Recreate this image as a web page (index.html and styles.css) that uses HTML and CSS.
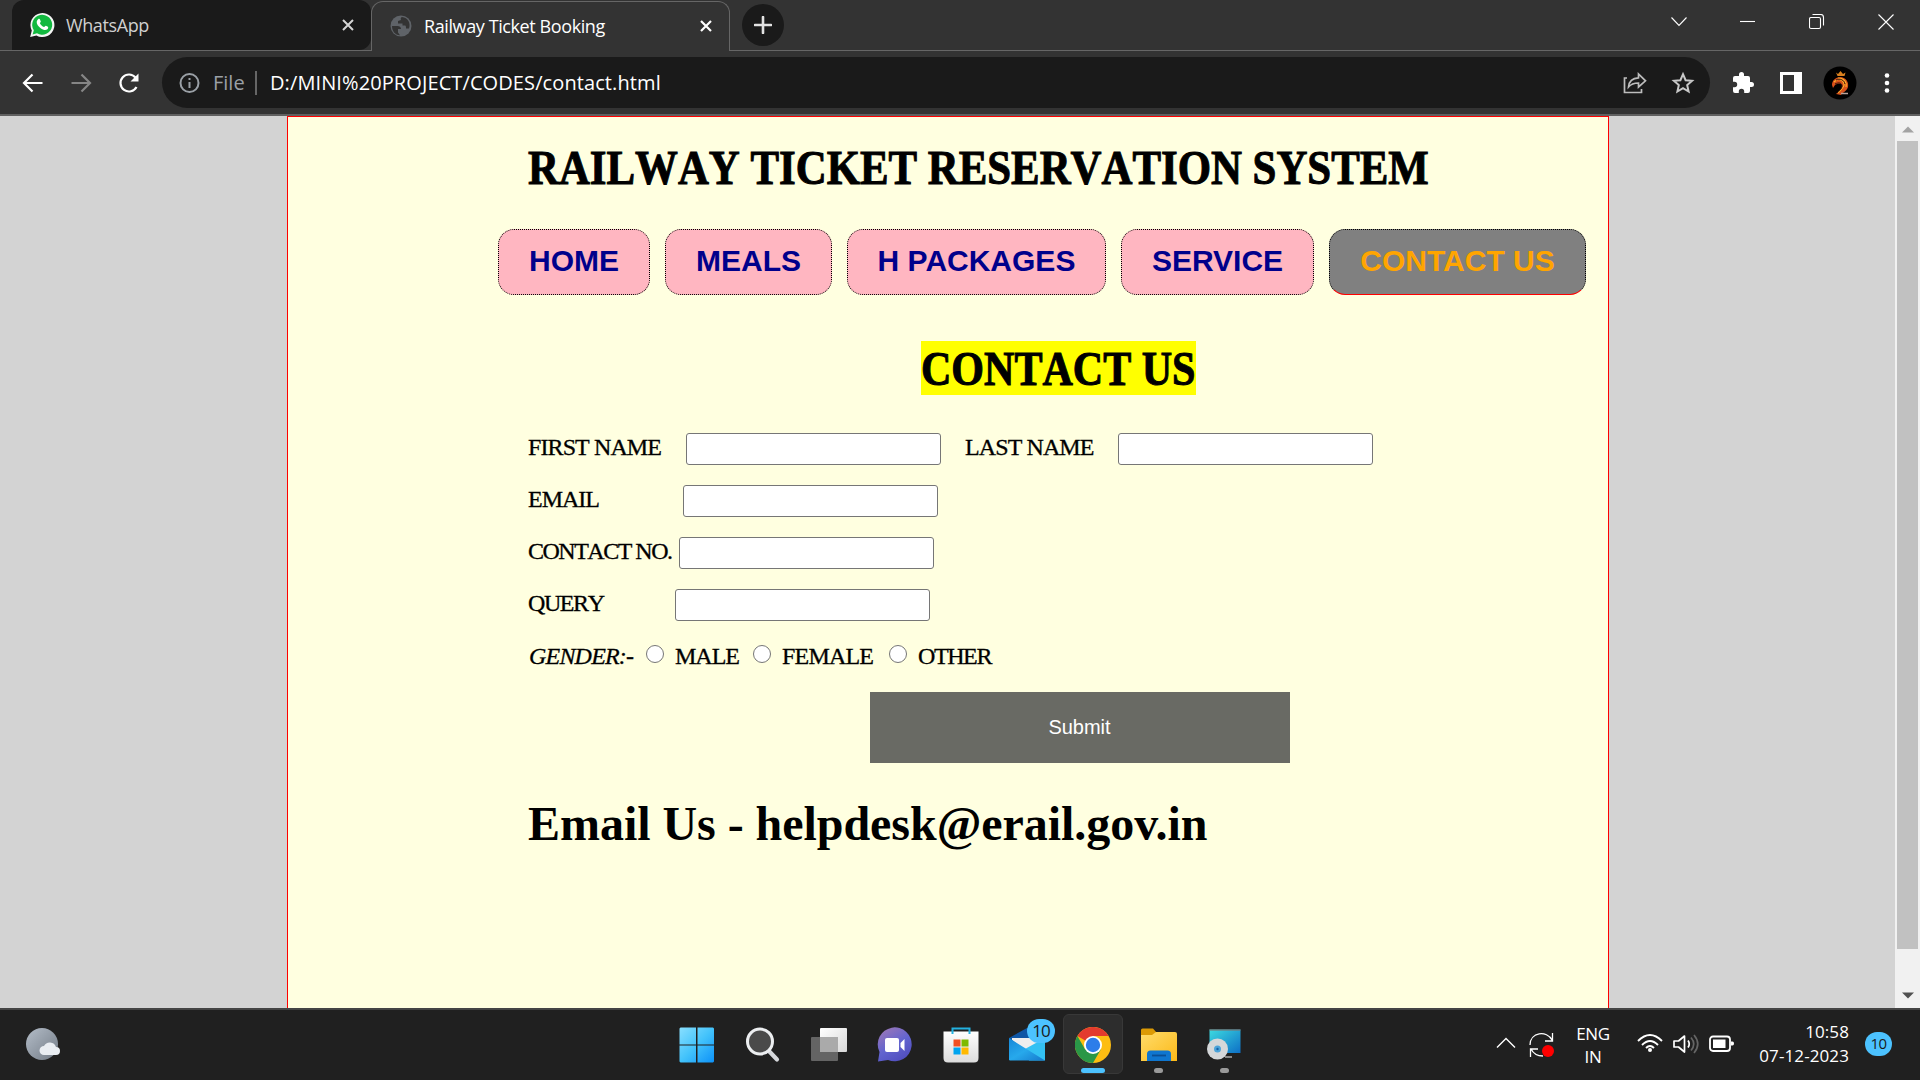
FILE: index.html
```html
<!DOCTYPE html>
<html lang="en">
<head>
<meta charset="utf-8">
<title>Railway Ticket Booking</title>
<link rel="stylesheet" href="styles.css">
</head>
<body>
<header class="tabstrip">
  <div class="tab">
    <svg class="fav" width="26" height="26" viewBox="0 0 26 26"><path d="M1.2 25 2.8 18.6A12 12 0 1 1 7.4 23.4Z" fill="#f5f5f5"/><path d="M3.6 22.4 4.8 18.2A10 10 0 1 1 8 21.3Z" fill="#12b93f"/><path d="M9.2 7.2c.8-.8 1.5-.4 1.8.4l.8 1.9c.1.6-.9 1.300-.9 1.700.9 1.900 2.300 3.100 4.100 3.900.6 0 1.300-1.500 1.900-1.300l2 1c.6.5.2 1.900-.5 2.500-1.800 1.500-4.400.6-6.700-1.100-2.400-1.800-4.200-4.300-4-6.300.1-1.100.7-1.900 1.500-2.700Z" fill="#fff"/></svg>
    <span class="tab-title t1">WhatsApp</span>
    <svg class="x" width="12" height="12" viewBox="0 0 12 12"><path d="M1 1 11 11M11 1 1 11" stroke="#d5d5d5" stroke-width="2"/></svg>
  </div>
  <div class="tab active">
    <svg class="fav" width="22" height="22" viewBox="0 0 22 22"><circle cx="11" cy="11" r="10.500" fill="#5f6368"/><path d="M2 11h5.500c2 0 3.500 1 3.500 3h-3v3.500l2 2.700C5 20 2 16 2 11ZM12 2c-1.500.2-1.500 2-1 3l-3 1v2.500h4.500v2H15c1 0 1 2 1 3h3c2-5-1-11-7-11.500Z" fill="#333"/></svg>
    <span class="tab-title t2">Railway Ticket Booking</span>
    <svg class="x" width="12" height="12" viewBox="0 0 12 12"><path d="M1 1 11 11M11 1 1 11" stroke="#fff" stroke-width="2.200"/></svg>
  </div>
  <div class="newtab"><svg width="18" height="18" viewBox="0 0 18 18"><path d="M9 1v16M1 9h16" stroke="#e2e2e2" stroke-width="2.600" stroke-linecap="round"/></svg></div>
  <div class="winctl">
    <svg width="16" height="16" viewBox="0 0 16 16"><path d="M.5 3.500 8 11.500l7.500-8" /></svg>
    <svg width="16" height="16" viewBox="0 0 16 16"><path d="M0 7.500h15" /></svg>
    <svg width="16" height="16" viewBox="0 0 16 16"><rect x=".5" y="3.500" width="11" height="11" rx="1.500"/><path d="M3.500.5h8q3 0 3 3v8"/></svg>
    <svg width="16" height="16" viewBox="0 0 16 16"><path d="M.5.500l15 15M15.500.500l-15 15"/></svg>
  </div>
</header>
<div class="toolbar">
  <svg class="navi" width="22" height="22" viewBox="0 0 22 22"><path d="M20.500 11H2.500M10.500 2.500 2 11l8.500 8.500" stroke="#fff"/></svg>
  <svg class="navi" width="22" height="22" viewBox="0 0 22 22"><path d="M1.500 11h18M11.500 2.500 20 11l-8.500 8.500" stroke="#868686"/></svg>
  <svg class="navi" width="22" height="22" viewBox="0 0 22 22"><path d="M18.500 15A8.500 8.500 0 1 1 17.500 5.500" stroke="#fff"/><path d="M20.500 1.500v8h-8Z" fill="#fff" stroke="none"/></svg>
  <div class="omnibox">
    <svg width="22" height="22" viewBox="0 0 22 22"><circle cx="10.500" cy="11" r="9" fill="none" stroke="#9aa0a6" stroke-width="2"/><path d="M10.500 10v6M10.500 6v2" stroke="#9aa0a6" stroke-width="2"/></svg>
    <span class="scheme">File</span><i class="sep"></i><span class="url">D:/MINI%20PROJECT/CODES/contact.html</span>
    <svg class="share" width="24" height="22" viewBox="0 0 24 22" fill="none" stroke="#bdbdbd" stroke-width="1.700"><path d="M4 6H1.500v14.500h17V17"/><path d="M5.500 15C6 9 10 6 15.500 5.800V2L22.500 8.800 15.500 15v-4C11 11 8 12 5.500 15Z"/></svg>
    <svg width="24" height="24" viewBox="0 0 24 24" fill="none" stroke="#c8c8c8" stroke-width="2"><path d="m12 3.200 2.600 6 6.500.6-4.900 4.300 1.400 6.400L12 17.200l-5.600 3.300 1.400-6.400-4.900-4.300 6.500-.6Z"/></svg>
  </div>
  <svg class="puz" width="24" height="24" viewBox="0 0 24 24"><path fill="#fff" d="M20.500 11H19V7a2 2 0 0 0-2-2h-4V3.500a2.500 2.500 0 0 0-5 0V5H4a2 2 0 0 0-2 2v3.800h1.500a2.700 2.700 0 0 1 0 5.400H2V20a2 2 0 0 0 2 2h3.800v-1.500a2.700 2.700 0 0 1 5.400 0V22H17a2 2 0 0 0 2-2v-4h1.500a2.500 2.500 0 0 0 0-5Z"/></svg>
  <svg class="side" width="22" height="22" viewBox="0 0 22 22"><path fill="#fff" d="M0 0h22v22H0Z"/><path fill="#333" d="M3 3h11v16H3Z"/></svg>
  <svg class="avatar" width="34" height="34" viewBox="0 0 34 34"><circle cx="17" cy="17" r="16.500" fill="#000"/><path d="M13 6.500l2 1.500 2.500-3 2.500 3 2.500-1.500-1 3.500h-7Z" fill="#d8801f"/><path d="M9 19c0-5 4-8 9-8 5 1 8 5 7 10-1 4-5 5-7 8l-5-1c3-3 7-5 6-9-2-2-5-1-7 0l-2 3Z" fill="#d8501a"/><path d="M11 16c4-4 9-3 10 2 1 3-4 6-6 9M15 12c6 0 9 4 8 9" stroke="#ffb52c" stroke-width="1.100" fill="none"/><path d="M12 18c4-2 7-1 7 2s-3 5-5 7M13 14c4-2 8 0 9 4" fill="none" stroke="#35100a"/><path d="M18 27.500h7" stroke="#b9a39b" stroke-width="1.500"/></svg>
  <svg class="dots" width="6" height="22" viewBox="0 0 6 22" fill="#fff"><circle cx="3" cy="3.500" r="2.300"/><circle cx="3" cy="11" r="2.300"/><circle cx="3" cy="18.500" r="2.300"/></svg>
</div>

<main class="viewport">
  <div class="page">
    <h1 class="site-title">RAILWAY TICKET RESERVATION SYSTEM</h1>
    <nav class="menu">
      <a class="w1">HOME</a><a class="w2">MEALS</a><a class="w3">H PACKAGES</a><a class="w4">SERVICE</a><a class="w5 current">CONTACT US</a>
    </nav>
    <div class="heading"><h2><span>CONTACT US</span></h2></div>
    <form class="form">
      <div class="row"><label class="l1">FIRST NAME</label><input type="text"><label class="l2">LAST NAME</label><input type="text"></div>
      <div class="row"><label class="l3">EMAIL</label><input type="text"></div>
      <div class="row"><label class="l4">CONTACT NO.</label><input type="text"></div>
      <div class="row"><label class="l5">QUERY</label><input type="text"></div>
      <div class="row gender"><em>GENDER:-</em><i class="radio"></i><span class="g1">MALE</span><i class="radio"></i><span class="g2">FEMALE</span><i class="radio"></i><span class="g3">OTHER</span></div>
      <button type="button" class="submit">Submit</button>
    </form>
    <h1 class="mail">Email Us - helpdesk@erail.gov.in</h1>
  </div>
  <div class="scrollbar">
    <svg width="12" height="7" viewBox="0 0 12 7"><path d="M0 6.500 6 .5l6 6Z" fill="#a3a3a3"/></svg>
    <div class="thumb"></div>
    <svg width="12" height="7" viewBox="0 0 12 7"><path d="M0 .5 6 6.500l6-6Z" fill="#505050"/></svg>
  </div>
</main>

<footer class="taskbar">
  <svg class="weather" width="36" height="36" viewBox="0 0 36 36"><defs><linearGradient id="w" x2="1" y2="1"><stop stop-color="#b4bdc8"/><stop offset="1" stop-color="#727b86"/></linearGradient></defs><circle cx="16" cy="18" r="16" fill="url(#w)"/><path d="M18 29a4.500 4.500 0 0 1 0-9 6.500 6.500 0 0 1 12 1 4 4 0 0 1 0 8Z" fill="#e9edf2"/></svg>
  <div class="apps">
    <div class="app"><svg width="36" height="36" viewBox="0 0 36 36"><defs><linearGradient id="b" gradientUnits="userSpaceOnUse" x1="0" y1="0" x2="36" y2="36"><stop stop-color="#8be0ff"/><stop offset=".5" stop-color="#43c3fb"/><stop offset="1" stop-color="#0a8ff8"/></linearGradient></defs><path fill="url(#b)" d="M1.500.5H17v17H.5v-16ZM18.500.5h15.500l1 1v16H18.500ZM.5 18.500H17V35.500H1.500l-1-1ZM18.500 18.500H35v16l-1 1H18.500Z"/></svg></div>
    <div class="app"><svg width="36" height="36" viewBox="0 0 36 36"><path d="m23 23 9 9.500" stroke="#d6d8dc" stroke-width="4.200" stroke-linecap="round"/><circle cx="15" cy="14.500" r="12.500" fill="#4a4a4a" stroke="#eceef0" stroke-width="3"/></svg></div>
    <div class="app"><svg width="38" height="36" viewBox="0 0 38 36"><defs><linearGradient id="tv" x2="1" y2="1"><stop stop-color="#fff"/><stop offset="1" stop-color="#d8d8d8"/></linearGradient></defs><rect x="10" y="1" width="27" height="24" rx="1" fill="url(#tv)"/><rect x="1" y="10" width="27" height="24" rx="1" fill="#646464"/><path d="M10 10h18v15H10Z" fill="#aaa"/></svg></div>
    <div class="app"><svg width="36" height="36" viewBox="0 0 36 36"><defs><linearGradient id="ch" x2=".6" y2="1"><stop stop-color="#a47ab4"/><stop offset=".6" stop-color="#6264cf"/><stop offset="1" stop-color="#5250c0"/></linearGradient></defs><path d="M1 34.500 2.500 25A17 17 0 1 1 11 33Z" fill="url(#ch)"/><rect x="8" y="11" width="14" height="14" rx="2" fill="#fff"/><path d="m23.500 16 4-4v12l-4-4Z" fill="#fff"/></svg></div>
    <div class="app"><svg width="36" height="36" viewBox="0 0 36 36"><defs><linearGradient id="st" x2="0" y2="1"><stop stop-color="#fff"/><stop offset="1" stop-color="#dcdcdc"/></linearGradient></defs><path d="M.5 4.500h35V31q0 4.500-4.500 4.500H5Q.5 35.500.5 31Z" fill="url(#st)"/><path d="M9.500 7V1.500h17V7" fill="none" stroke="#23b1e0" stroke-width="2"/><path fill="#f25022" d="M10.500 12.500h7v7h-7Z"/><path fill="#7fba00" d="M18.500 12.500h7v7h-7Z"/><path fill="#00a4ef" d="M10.500 20.500h7v7h-7Z"/><path fill="#ffb900" d="M18.500 20.500h7v7h-7Z"/></svg></div>
    <div class="app"><svg width="36" height="36" viewBox="0 0 36 36"><defs><linearGradient id="ml" x2="1" y2="1"><stop stop-color="#1687d8"/><stop offset=".5" stop-color="#27a9ec"/><stop offset="1" stop-color="#1578cc"/></linearGradient></defs><path d="M0 11 18 1l18 10v12H0Z" fill="#0f56a5"/><path d="M3 11h30v8L18 25 3 13Z" fill="#eee"/><path d="M36 11v22.500H20L16 22Z" fill="#33c1f3"/><path d="M0 11 36 33.500H1L0 33Z" fill="url(#ml)"/></svg><b class="count">10</b></div>
    <div class="app on"><svg width="36" height="36" viewBox="0 0 36 36"><circle cx="18" cy="18" r="18" fill="#fdbd12"/><path d="M18 18 2.400 9A18 18 0 0 1 33.600 9H18Z" fill="#e33b2e"/><path d="M2.400 9A18 18 0 0 0 18 36l7.800-13.500L10.200 22.500Z" fill="#2a9747"/><circle cx="18" cy="18" r="9" fill="#fff"/><circle cx="18" cy="18" r="7.200" fill="#2d7de9"/></svg><i class="run"></i></div>
    <div class="app"><svg width="36" height="36" viewBox="0 0 36 36"><defs><linearGradient id="fo" x2="1" y2="1"><stop stop-color="#ffdc6b"/><stop offset="1" stop-color="#fcb918"/></linearGradient></defs><path d="M0 3q0-1.500 1.500-1.500H12l3.500 4V9H0Z" fill="#dc9a05"/><path d="M0 8h11l4-3h19q2 0 2 2v27H0Z" fill="url(#fo)"/><path d="M6 34V27q0-3.500 3.500-3.500h17q3.500 0 3.500 3.500v7Z" fill="#0f76cf"/><path d="M11 28.500h14" stroke="#0a4f94" stroke-width="1.800"/></svg><i class="run dot"></i></div>
    <div class="app"><svg width="36" height="36" viewBox="0 0 36 36"><defs><linearGradient id="sc" x2="1" y2="1"><stop stop-color="#3cdbe0"/><stop offset="1" stop-color="#0d6fc6"/></linearGradient></defs><path d="M2.500 2.500h31V26h-31Z" fill="url(#sc)"/><path d="M2.500 3h31" stroke="#777" stroke-width="1.200"/><path d="M18 30h7" stroke="#aaa" stroke-width="1.500"/><circle cx="10.500" cy="22" r="10.500" fill="#d4d7d9"/><circle cx="10.500" cy="22" r="3.500" fill="#4ba3d9"/><circle cx="10.500" cy="22" r="1.200" fill="#1560a8"/></svg><i class="run dot"></i></div>
  </div>
  <div class="tray">
    <svg class="up" width="20" height="12" viewBox="0 0 20 12"><path d="m1 10.500 9-9 9 9" fill="none" stroke="#fff" stroke-width="1.400"/></svg>
    <svg class="sync" width="26" height="26" viewBox="0 0 26 26" fill="none" stroke="#fff" stroke-width="1.300"><path d="M1 13C1 0 18-2 23 8M23.500 1v8H16M1.500 25v-8H9M2 17c3 6 7 7 12 7"/><circle cx="19" cy="19" r="6" fill="#f00" stroke="none"/></svg>
    <div class="lang">ENG<br>IN</div>
    <svg class="wifi" width="26" height="20" viewBox="0 0 26 20" fill="none" stroke="#fff" stroke-width="1.900"><path d="M1 8q12-12 24 0M5 12q8-8 16 0M9 15q4-4 8 0"/><circle cx="13" cy="17" r="2" fill="#fff" stroke="none"/></svg>
    <svg class="vol" width="26" height="22" viewBox="0 0 26 22" fill="none" stroke-width="1.700"><path d="M1 8v6h4.500l6 5V3l-6 5Z" stroke="#fff" stroke-linejoin="round"/><path d="M15 7.500q2.500 3.500 0 7" stroke="#fff"/><path d="M18 4.500q5.500 6.500 0 13M21 2q7.500 9 0 18" stroke="#656565"/></svg>
    <svg class="bat" width="26" height="18" viewBox="0 0 26 18"><rect x="1" y="1.500" width="20" height="14.500" rx="3" fill="none" stroke="#fff" stroke-width="1.800"/><path d="M4 4.500h12.500v8.500H4ZM22 6.500h1.500q1.500 0 1.500 2t-1.500 2H22Z" fill="#fff"/></svg>
    <div class="clock">10:58<br>07-12-2023</div>
    <b class="note">10</b>
  </div>
</footer>
</body>
</html>
```

FILE: styles.css
```css
* { box-sizing: border-box; }
body {
  margin: 0;
  width: 1920px;
  height: 1080px;
  overflow: hidden;
  display: flex;
  flex-direction: column;
  font-family: "Open Sans", "Noto Sans", sans-serif;
}
svg { display: block; flex: none; }

/* browser window */
.tabstrip {
  height: 51px;
  flex: none;
  display: flex;
  background: #333;
  box-shadow: inset 0 -1px #666;
  padding-left: 12px;
}
.tab {
  width: 359px;
  height: 50px;
  display: flex;
  align-items: center;
  padding: 0 17px;
  color: #d0d0d0;
  background: #1a1a1a;
  border-radius: 12px 12px 12px 0;
  font-size: 18px;
}
.tab.active {
  height: 50px;
  width: 359px;
  margin-top: 1px;
  padding: 0 17px 2px 18px;
  background: #333;
  color: #fff;
  border: 1px solid #666;
  border-bottom: 0;
  border-radius: 12px 12px 0 0;
}
.tab-title { margin-left: 11px; white-space: nowrap; }
.active .tab-title { margin-left: 12px; }
.t1 { letter-spacing: -0.4px; }
.t2 { letter-spacing: -0.4px; }
.tab .x { margin-left: auto; }
.newtab {
  width: 42px;
  height: 42px;
  margin: 4px 0 0 12px;
  border-radius: 50%;
  background: #1a1a1a;
  display: flex;
  align-items: center;
  justify-content: center;
}
.winctl {
  margin-left: auto;
  padding: 14px 26px 0 0;
  display: flex;
  gap: 53px;
  fill: none;
  stroke: #fff;
  stroke-width: 1.1;
}
.toolbar {
  height: 65px;
  flex: none;
  display: flex;
  align-items: center;
  background: #333;
  border-bottom: 2px solid #606060;
  padding-left: 22px;
}
.navi { margin-right: 26px; fill: none; stroke-width: 2.2; }
.omnibox {
  width: 1548px;
  height: 51px;
  margin-left: -4px;
  padding: 0 15px 0 17px;
  display: flex;
  align-items: center;
  border-radius: 26px;
  background: #1a1a1a;
  font-size: 20px;
  white-space: nowrap;
}
.scheme { margin-left: 12px; width: 34px; color: #9aa0a6; letter-spacing: 0; }
.sep { width: 2px; height: 24px; margin: 0 13px 0 8px; background: #666; }
.url { color: #fff; letter-spacing: 0.1px; }
.share { margin: 0 24px 0 auto; }
.puz { margin-left: 21px; }
.side { margin-left: 25px; }
.avatar { margin-left: 21px; }
.dots { margin-left: 27px; }

/* web page */
.viewport {
  height: 892px;
  flex: none;
  display: flex;
  background: #d3d3d3;
  padding-left: 287px;
}
.page {
  width: 1322px;
  border: 1px solid #f00;
  border-bottom: 0;
  background: #ffffe0;
  font-family: Algerian, "Liberation Serif", serif;
  color: #000;
}
.site-title {
  margin: 23px 0 0 240px;
  font-size: 49px;
  line-height: 56px;
  height: 56px;
  font-kerning: none;
  white-space: nowrap;
  transform: scaleX(.874);
  transform-origin: 0 0;
  -webkit-text-stroke: 1px #000;
}
.menu {
  display: flex;
  gap: 15px;
  margin: 33px 0 0 210px;
  font: bold 30px/62px "Liberation Sans", Arial, sans-serif;
}
.menu a {
  height: 66px;
  border: 1px dotted #000;
  border-radius: 16px;
  background: #ffb6c1;
  color: #00008b;
  text-align: center;
  white-space: nowrap;
}
.w1 { width: 152px; }
.w2 { width: 167px; }
.w3 { width: 259px; }
.w4 { width: 193px; }
.menu .w5 { width: 257px; }
.menu .current {
  background: #808080;
  color: #ffa500;
  border-bottom: 1px solid #f00;
}
.heading { margin: 46px 0 0 633px; width: 276px; }
.heading h2 {
  margin: 0;
  width: 275px;
  height: 54px;
  background: #ff0;
  font-size: 49px;
  line-height: 55px;
  font-kerning: none;
  white-space: nowrap;
}
.heading span {
  display: inline-block;
  transform: scaleX(.858);
  transform-origin: 0 0;
  -webkit-text-stroke: 1px #000;
}
.form {
  margin: 38px 0 0 240px;
  font-size: 24px;
  line-height: 28px;
  font-kerning: none;
  white-space: nowrap;
  -webkit-text-stroke: .3px #000;
}
.row { height: 32px; margin-bottom: 20px; display: flex; }
.row input {
  flex: none;
  width: 255px;
  height: 32px;
  margin: 0;
  padding: 0;
  border: 1px solid #767676;
  border-radius: 3px;
  background: #fff;
}
.l1 { width: 158px; letter-spacing: -0.9px; }
.l2 { width: 153px; margin-left: 24px; letter-spacing: -0.9px; }
.l3 { width: 155px; letter-spacing: -1px; }
.l4 { width: 151px; letter-spacing: -1.5px; }
.l5 { width: 147px; letter-spacing: -1.4px; }
.gender { height: 31px; margin-bottom: 20px; line-height: 31px; }
.gender em { width: 118px; padding-left: 1px; letter-spacing: -0.8px; }
.radio {
  width: 18px;
  height: 18px;
  margin-top: 4px;
  border: 1.5px solid #767676;
  border-radius: 50%;
  background: #fff;
}
.g1, .g2, .g3 { padding-left: 11px; }
.g1 { width: 89px; letter-spacing: -1px; }
.g2 { width: 118px; letter-spacing: -0.8px; }
.g3 { letter-spacing: -1.4px; }
.submit {
  display: block;
  width: 420px;
  height: 71px;
  margin-left: 342px;
  padding: 0 7px 0 6px;
  border: 0;
  background: #696a64;
  color: #fff;
  font: 20px "Liberation Sans", Arial, sans-serif;
  -webkit-text-stroke: 0;
}
.mail {
  margin: 33px 0 0 240px;
  font-family: "Liberation Serif", serif;
  font-size: 48px;
  line-height: 55px;
  letter-spacing: -0.04px;
  white-space: nowrap;
}
.scrollbar {
  width: 25px;
  margin-left: auto;
  background: #f1f1f1;
  display: flex;
  flex-direction: column;
  align-items: center;
  padding: 10px 0 9px;
}
.thumb { width: 21px; height: 808px; margin: 8px 0 auto; background: #c1c1c1; }

/* taskbar */
.taskbar {
  height: 72px;
  flex: none;
  display: flex;
  background: #202020;
  border-top: 2px solid #444;
  color: #fff;
}
.weather { margin: 16px 0 0 26px; }
.apps { display: flex; gap: 6px; margin: 4px 0 0 605px; }
.app {
  position: relative;
  width: 60px;
  height: 60px;
  display: flex;
  align-items: center;
  justify-content: center;
  padding-top: 1px;
  border-radius: 6px;
}
.on { background: #2d2d2d; border: 1px solid #383838; }
.run {
  position: absolute;
  left: 17px;
  bottom: 0;
  width: 24px;
  height: 5px;
  border-radius: 3px;
  background: #4cc2ff;
}
.dot { left: 25px; bottom: 1px; width: 9px; background: #9a9a9a; }
.count, .note {
  height: 24px;
  border-radius: 12px;
  background: #4cc2ff;
  color: #1a1a1a;
  font-weight: 400;
  text-align: center;
}
.count {
  position: absolute;
  left: 30px;
  top: 5px;
  width: 28px;
  font-size: 17px;
  line-height: 24px;
  letter-spacing: -1px;
}
.tray { display: flex; margin-left: 241px; font-size: 17px; line-height: 23px; }
.up { margin-top: 27px; }
.sync { margin: 22px 0 0 13px; }
.lang { width: 50px; margin: 12px 0 0 13px; text-align: center; letter-spacing: -0.3px; }
.wifi { margin: 23px 0 0 19px; }
.vol { margin: 23px 0 0 10px; }
.bat { margin: 25px 0 0 10px; }
.clock { width: 100px; margin: 10px 0 0 14px; text-align: right; line-height: 24px; letter-spacing: 0.1px; }
.note { width: 27px; margin: 22px 0 0 16px; font-size: 15px; line-height: 23px; letter-spacing: -0.5px; }
```
